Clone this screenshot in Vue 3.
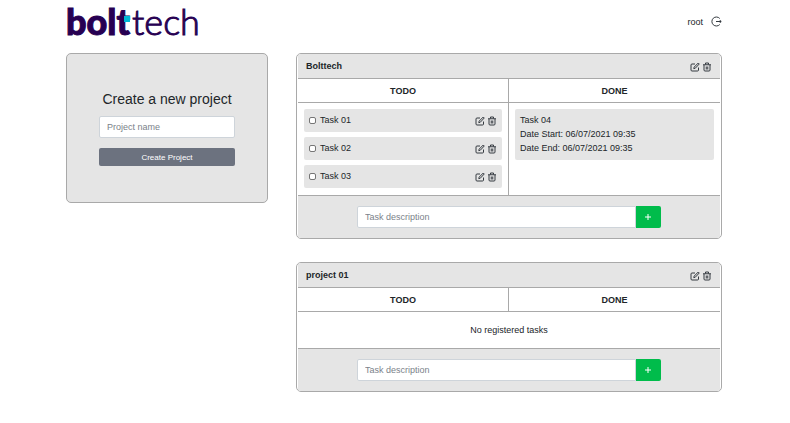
<script setup>
import { ref } from 'vue'

const user = 'root'
const projectName = ref('')

const projects = ref([
  {
    id: 1,
    name: 'Bolttech',
    draft: '',
    todo: [
      { id: 1, text: 'Task 01', checked: false },
      { id: 2, text: 'Task 02', checked: false },
      { id: 3, text: 'Task 03', checked: false },
    ],
    done: [{ id: 4, text: 'Task 04', start: '06/07/2021 09:35', end: '06/07/2021 09:35' }],
  },
  { id: 2, name: 'project 01', draft: '', todo: [], done: [] },
])

let nextId = 10

function createProject() {
  const name = projectName.value.trim()
  if (!name) return
  projects.value.push({ id: nextId++, name, draft: '', todo: [], done: [] })
  projectName.value = ''
}

function addTask(project) {
  const text = project.draft.trim()
  if (!text) return
  project.todo.push({ id: nextId++, text, checked: false })
  project.draft = ''
}

function removeProject(id) {
  projects.value = projects.value.filter((p) => p.id !== id)
}

function removeTask(project, id) {
  project.todo = project.todo.filter((t) => t.id !== id)
}
</script>

<template>
  <svg class="sprite" aria-hidden="true">
    <symbol id="icon-edit" viewBox="0 0 20 20">
      <path d="M10 4H4a2 2 0 0 0-2 2v10a2 2 0 0 0 2 2h11a2 2 0 0 0 2-2v-5" />
      <path d="M16.500 2l2 2-8 8.500-3 .8.800-3z" />
    </symbol>
    <symbol id="icon-trash" viewBox="0 0 20 20">
      <path d="M2 5.500h16M7 5V2h6v3M4 6v10a2 2 0 0 0 2 2h8a2 2 0 0 0 2-2V6M8.500 9v6M11.500 9v6" />
    </symbol>
    <symbol id="icon-logout" viewBox="0 0 22 22">
      <path d="M17.500 5A9 9 0 1 0 17.500 17M10 11h10M18 9l2.500 2-2.500 2z" />
    </symbol>
  </svg>

  <div class="page">
    <header class="topbar">
      <a class="logo" href="#"><span class="logo-bold">bolt<i class="pixel"></i></span><span class="logo-thin">tech</span></a>
      <div class="user">
        <span>{{ user }}</span>
        <button class="icon-button" type="button" aria-label="Log out">
          <svg class="icon icon-logout"><use href="#icon-logout" /></svg>
        </button>
      </div>
    </header>

    <main class="content">
      <form class="create" @submit.prevent="createProject">
        <h1>Create a new project</h1>
        <input v-model="projectName" class="field" type="text" placeholder="Project name" aria-label="Project name" />
        <button class="create-button" type="submit">Create Project</button>
      </form>

      <div class="projects">
        <section v-for="project in projects" :key="project.id" class="project">
          <div class="project-head">
            <h2>{{ project.name }}</h2>
            <div class="actions">
              <button class="icon-button" type="button" aria-label="Edit project">
                <svg class="icon"><use href="#icon-edit" /></svg>
              </button>
              <button class="icon-button" type="button" aria-label="Delete project" @click="removeProject(project.id)">
                <svg class="icon"><use href="#icon-trash" /></svg>
              </button>
            </div>
          </div>

          <div class="columns titles">
            <h3>TODO</h3>
            <h3>DONE</h3>
          </div>

          <div v-if="project.todo.length || project.done.length" class="columns">
            <ul class="tasks">
              <li v-for="task in project.todo" :key="task.id" class="task">
                <label class="task-label">
                  <input v-model="task.checked" class="check" type="checkbox" />
                  <span>{{ task.text }}</span>
                </label>
                <div class="actions">
                  <button class="icon-button" type="button" aria-label="Edit task">
                    <svg class="icon"><use href="#icon-edit" /></svg>
                  </button>
                  <button class="icon-button" type="button" aria-label="Delete task" @click="removeTask(project, task.id)">
                    <svg class="icon"><use href="#icon-trash" /></svg>
                  </button>
                </div>
              </li>
            </ul>
            <ul class="tasks">
              <li v-for="task in project.done" :key="task.id" class="task finished">
                <span>{{ task.text }}</span>
                <span>Date Start: {{ task.start }}</span>
                <span>Date End: {{ task.end }}</span>
              </li>
            </ul>
          </div>
          <p v-else class="empty">No registered tasks</p>

          <form class="add" @submit.prevent="addTask(project)">
            <input v-model="project.draft" class="field add-field" type="text" placeholder="Task description" aria-label="Task description" />
            <button class="add-button" type="submit" aria-label="Add task">
              <svg class="plus" viewBox="0 0 8 8"><path d="M4 1v6M1 4h6" /></svg>
            </button>
          </form>
        </section>
      </div>
    </main>
  </div>
</template>

<style>
body {
  background: #fff;
}
</style>

<style scoped>
* {
  box-sizing: border-box;
  margin: 0;
}

.sprite {
  position: absolute;
  width: 0;
  height: 0;
}

.page {
  padding: 0 68px 32px 66px;
  font-family: "Liberation Sans", Arial, sans-serif;
  font-size: 9px;
  line-height: 14px;
  color: #212529;
}

.topbar {
  display: flex;
  align-items: center;
  justify-content: space-between;
  height: 43px;
  margin-bottom: 10px;
}

.logo {
  display: flex;
  gap: 2px;
  font-family: Lato, sans-serif;
  font-size: 36px;
  line-height: 43px;
  color: #270052;
  text-decoration: none;
}

.logo-bold {
  position: relative;
  font-weight: 900;
  -webkit-text-stroke: 1px #270052;
}

.logo-thin {
  font-weight: 300;
  -webkit-text-stroke: 1px #270052;
}

.pixel {
  position: absolute;
  top: 16px;
  right: 0;
  width: 6px;
  height: 6px;
  background: #00b8d4;
}

.user {
  display: flex;
  align-items: center;
  gap: 8px;
}

.icon-button {
  display: flex;
  padding: 0;
  border: 0;
  background: none;
  color: #343a40;
  cursor: pointer;
}

.icon {
  width: 10px;
  height: 10px;
  fill: none;
  stroke: currentColor;
  stroke-width: 2;
  stroke-linejoin: round;
}

.icon-logout {
  width: 11px;
  height: 11px;
}

.content {
  display: grid;
  grid-template-columns: 202fr 426fr;
  gap: 28px;
  align-items: start;
}

.create,
.project {
  border: 1px solid #a9a9a9;
  border-radius: 5px;
}

.create {
  display: flex;
  flex-direction: column;
  padding: 36px 32px;
  background: #e5e5e5;
}

h1 {
  font-size: 14px;
  line-height: 18px;
  font-weight: 400;
  text-align: center;
  margin-bottom: 8px;
}

.field {
  width: 100%;
  min-width: 0;
  height: 22px;
  padding: 0 7px;
  border: 1px solid #ced4da;
  border-radius: 2px;
  background: #fff;
  font: inherit;
  color: #212529;
}

.field::placeholder {
  color: #7b828a;
  opacity: 1;
}

.create-button {
  height: 18px;
  margin-top: 10px;
  border: 0;
  border-radius: 2px;
  background: #6c727f;
  color: #fff;
  font-family: inherit;
  font-size: 8px;
  cursor: pointer;
}

.projects {
  display: flex;
  flex-direction: column;
  gap: 23px;
}

.project {
  padding: 0 1px;
  overflow: hidden;
}

.project-head {
  display: flex;
  align-items: center;
  justify-content: space-between;
  padding: 5px 8px;
  background: #e5e5e5;
}

h2,
h3 {
  font-size: 9px;
  line-height: 14px;
  font-weight: 700;
}

.actions {
  display: flex;
  gap: 2px;
  padding-top: 1px;
}

.columns {
  display: grid;
  grid-template-columns: 1fr 1fr;
  border-top: 1px solid #a9a9a9;
}

.columns > :first-child {
  border-right: 1px solid #a9a9a9;
}

h3 {
  padding: 5px 0 4px;
  text-align: center;
}

.tasks {
  display: flex;
  flex-direction: column;
  gap: 5px;
  padding: 6px 6px 7px;
  list-style: none;
}

.task {
  display: flex;
  align-items: center;
  justify-content: space-between;
  padding: 4px 5px 5px;
  border-radius: 2px;
  background: #e5e5e5;
}

.finished {
  flex-direction: column;
  align-items: flex-start;
  align-self: stretch;
}

.task-label {
  display: flex;
  align-items: center;
  gap: 4px;
}

.check {
  appearance: none;
  width: 7px;
  height: 7px;
  border: 1px solid #767676;
  border-radius: 2px;
  background: #fff;
}

.check:checked {
  background: #0d6efd;
}

.empty {
  padding: 11px 0;
  border-top: 1px solid #a9a9a9;
  text-align: center;
}

.add {
  display: flex;
  padding: 10px 14%;
  border-top: 1px solid #a9a9a9;
  background: #e5e5e5;
}

.add-field {
  flex: 1;
  border-radius: 2px 0 0 2px;
}

.add-button {
  display: flex;
  align-items: center;
  justify-content: center;
  width: 25px;
  height: 22px;
  padding: 0;
  border: 0;
  border-radius: 0 2px 2px 0;
  background: #00bc4b;
  cursor: pointer;
}

.plus {
  width: 8px;
  height: 8px;
  fill: none;
  stroke: #fff;
  stroke-width: 1;
}
</style>
